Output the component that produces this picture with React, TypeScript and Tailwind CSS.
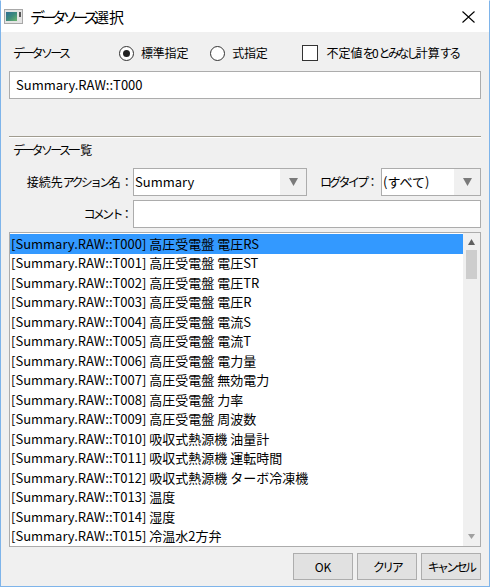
const items = [
  "[Summary.RAW::T000] 高圧受電盤 電圧RS",
  "[Summary.RAW::T001] 高圧受電盤 電圧ST",
  "[Summary.RAW::T002] 高圧受電盤 電圧TR",
  "[Summary.RAW::T003] 高圧受電盤 電圧R",
  "[Summary.RAW::T004] 高圧受電盤 電流S",
  "[Summary.RAW::T005] 高圧受電盤 電流T",
  "[Summary.RAW::T006] 高圧受電盤 電力量",
  "[Summary.RAW::T007] 高圧受電盤 無効電力",
  "[Summary.RAW::T008] 高圧受電盤 力率",
  "[Summary.RAW::T009] 高圧受電盤 周波数",
  "[Summary.RAW::T010] 吸収式熱源機 油量計",
  "[Summary.RAW::T011] 吸収式熱源機 運転時間",
  "[Summary.RAW::T012] 吸収式熱源機 ターボ冷凍機",
  "[Summary.RAW::T013] 温度",
  "[Summary.RAW::T014] 湿度",
  "[Summary.RAW::T015] 冷温水2方弁",
];

const font = { fontFamily: '"Noto Sans CJK JP", "Noto Sans", sans-serif' };

// kana and full-width colon are narrow in the original UI font, kanji are not
function J({ t, big }: { t: string; big?: boolean }) {
  const parts = t.split(/([\u3040-\u30ff\uff1a]+)/);
  return (
    <>
      {parts.map((p, i) =>
        i % 2 === 1 ? (
          <span key={i} className={big ? "tracking-[-4.2px]" : "tracking-[-2.7px]"}>
            {p}
          </span>
        ) : (
          <span key={i}>{p}</span>
        )
      )}
    </>
  );
}

function Combo({ value, className }: { value: string; className: string }) {
  return (
    <div className={`flex h-[28px] shrink-0 border border-[#acacac] bg-white ${className}`}>
      <div className="flex flex-1 items-center pl-[1px] text-[13px] text-black">{value}</div>
      <div className="flex w-[26px] items-center justify-center bg-[#f0f0f0]">
        <svg width="9" height="8" viewBox="0 0 9 8">
          <path d="M0 0h9L4.5 8z" fill="#7a7a7a" />
        </svg>
      </div>
    </div>
  );
}

function Button({ label }: { label: string }) {
  return (
    <div className="flex h-[27px] w-[60px] items-center justify-center whitespace-nowrap border border-[#adadad] bg-[#e1e1e1] text-[12px] text-black">
      <J t={label} />
    </div>
  );
}

export default function App() {
  return (
    <div
      className="flex h-[587px] w-[490px] flex-col overflow-hidden border border-[#7eb4ea] border-t-white bg-[#f0f0f0] text-[12px] leading-[16px] text-black"
      style={font}
    >
      {/* title bar */}
      <div className="flex h-[31px] shrink-0 items-center bg-white">
        <div className="ml-[3px] flex h-[15px] w-[19px] items-center border border-[#a8a8a8] bg-[#e4e4e4] px-[1px] py-[2px]">
          <div className="h-full w-[11px] bg-gradient-to-br from-[#2d6e94] via-[#3d8a7c] to-[#6cb56a]" />
          <div className="ml-[2px] h-[5px] w-[2px] self-start bg-[#555]" />
        </div>
        <div className="ml-[7px] whitespace-nowrap text-[15px] leading-none">
          <J t="データソース選択" big />
        </div>
        <div className="ml-auto mr-[14px] flex items-center">
          <svg width="13" height="12" viewBox="0 0 13 12">
            <path d="M0.5 0.5l12 11M12.5 0.5l-12 11" stroke="#000" strokeWidth="1.1" />
          </svg>
        </div>
      </div>

      <div className="flex flex-1 flex-col px-[8px]">
        {/* data source row */}
        <div className="mt-[12px] flex h-[18px] shrink-0 items-center whitespace-nowrap">
          <div className="ml-[4px] w-[106px]">
            <J t="データソース" />
          </div>
          <div className="flex items-center">
            <div className="flex h-[15px] w-[15px] items-center justify-center rounded-full border border-[#333] bg-white">
              <div className="h-[7px] w-[7px] rounded-full bg-[#222]" />
            </div>
            <span className="ml-[7px] tracking-[-0.2px]">標準指定</span>
          </div>
          <div className="ml-[22px] flex items-center">
            <div className="h-[15px] w-[15px] rounded-full border border-[#333] bg-white" />
            <span className="ml-[7px] tracking-[-0.2px]">式指定</span>
          </div>
          <div className="ml-[34px] flex items-center">
            <div className="h-[16px] w-[16px] border border-[#333] bg-white" />
            <span className="ml-[9px]">
              <J t="不定値を0とみなし計算する" />
            </span>
          </div>
        </div>

        <div className="mt-[9px] flex h-[28px] shrink-0 items-center border border-[#acacac] bg-white pl-[6px] text-[13px]">
          Summary.RAW::T000
        </div>

        <div className="mt-[37px] h-[2px] shrink-0 border-t border-b border-t-[#a09c8f] border-b-white" />

        <div className="mt-[4px] ml-[4px] h-[16px] shrink-0 whitespace-nowrap">
          <J t="データソース一覧" />
        </div>

        <div className="mt-[10px] flex h-[28px] shrink-0 items-center whitespace-nowrap">
          <div className="w-[121px] text-right">
            <J t="接続先アクション名：" />
          </div>
          <Combo value="Summary" className="ml-[3px] w-[174px]" />
          <div className="ml-[13px] w-[61px]">
            <J t="ログタイプ：" />
          </div>
          <Combo value="(すべて)" className="w-[100px]" />
        </div>

        <div className="mt-[4px] flex h-[28px] shrink-0 items-center whitespace-nowrap">
          <div className="w-[121px] text-right">
            <J t="コメント：" />
          </div>
          <div className="ml-[3px] h-[28px] flex-1 border border-[#acacac] bg-white" />
        </div>

        {/* list */}
        <div className="mt-[4px] flex h-[315px] shrink-0 border border-[#acacac] bg-white">
          <div className="flex-1 overflow-hidden pt-[1px]">
            {items.map((t, i) => (
              <div
                key={t}
                className={`flex h-[19.5px] items-center whitespace-nowrap pl-[1px] text-[13px] ${
                  i === 0 ? "bg-[#3399ff]" : ""
                }`}
              >
                {t}
              </div>
            ))}
          </div>
          <div className="flex w-[17px] flex-col items-center bg-[#f0f0f0]">
            <svg className="mt-[6px]" width="7" height="6" viewBox="0 0 7 6">
              <path d="M0 6h7L3.5 0z" fill="#606060" />
            </svg>
            <div className="mt-[5px] h-[29px] w-[11px] bg-[#cdcdcd]" />
            <svg className="mt-auto mb-[7px]" width="7" height="5" viewBox="0 0 7 5">
              <path d="M0 0h7L3.5 5z" fill="#a0a0a0" />
            </svg>
          </div>
        </div>

        <div className="mt-[6px] flex shrink-0 justify-end gap-[4px]">
          <Button label="OK" />
          <Button label="クリア" />
          <Button label="キャンセル" />
        </div>
      </div>
    </div>
  );
}
